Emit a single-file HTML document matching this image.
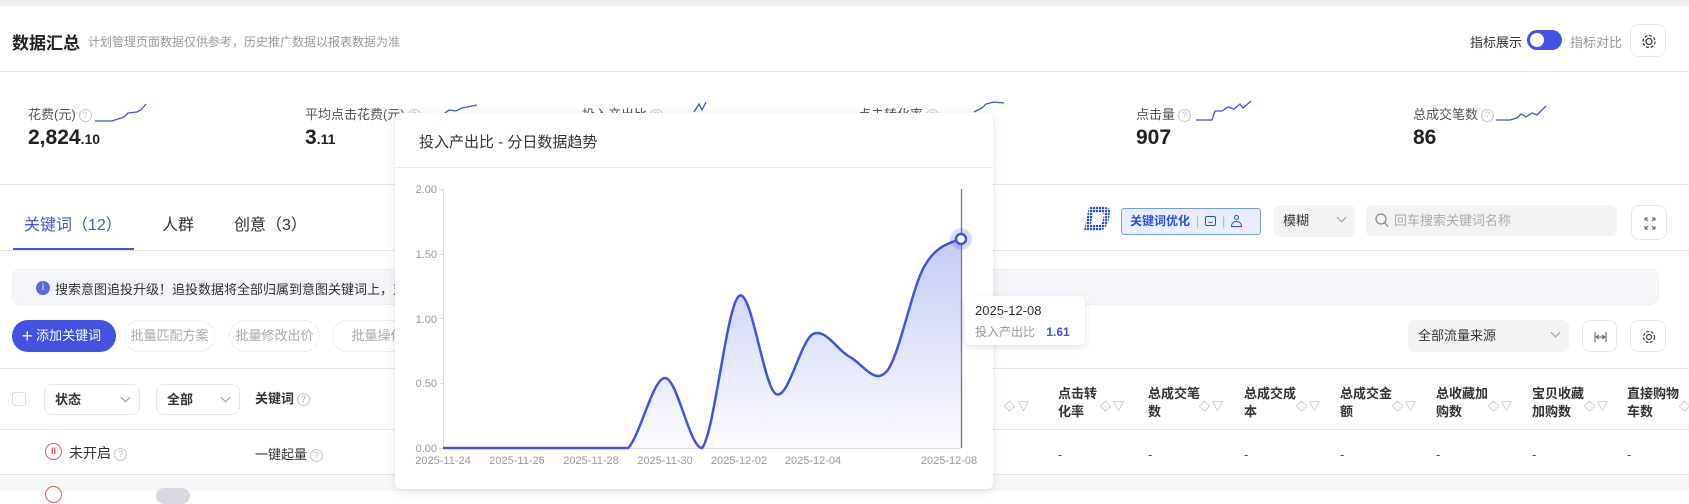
<!DOCTYPE html>
<html><head><meta charset="utf-8"><style>
*{margin:0;padding:0;box-sizing:border-box}
body{width:1689px;height:491px;overflow:hidden;background:#fff;font-family:"Liberation Sans","Noto Sans CJK SC",sans-serif;color:#333;position:relative}
.a{position:absolute;white-space:nowrap}
.q{display:inline-block;width:13px;height:13px;border:1px solid #c8c8c8;border-radius:50%;font-size:9px;color:#bbb;text-align:center;line-height:11px;vertical-align:middle;margin-left:3px}
.lbl{font-size:13px;color:#555}
.val{font-size:21px;font-weight:bold;color:#222}
.val small{font-size:14px}
.hr{position:absolute;left:0;width:1689px;height:1px;background:#e6e7eb}
.btn{position:absolute;border:1px solid #eee;border-radius:16px;font-size:13px;color:#aaa;text-align:center;line-height:30px;height:32px}
.sel{position:absolute;border:1px solid #e6e7eb;border-radius:8px;height:31px;font-size:13px;font-weight:bold;line-height:29px;padding-left:10px}
.chev{position:absolute;right:10px;top:9px;width:7px;height:7px;border-right:1px solid #999;border-bottom:1px solid #999;transform:rotate(45deg)}
.th{position:absolute;top:385px;font-size:13px;font-weight:bold;color:#333;line-height:18px}
.ic{position:absolute;border:1px solid #e6e7eb;border-radius:8px;width:36px;height:36px}
.dash{position:absolute;top:447px;font-size:13px;color:#555}
</style></head><body>
<div class="a" style="left:0;top:0;width:1689px;height:7px;background:linear-gradient(#e8e9ee,#f6f6f9)"></div>
<div class="a" style="left:12px;top:29px;font-size:17px;font-weight:bold;color:#222">数据汇总</div>
<div class="a" style="left:88px;top:33px;font-size:12px;color:#999">计划管理页面数据仅供参考，历史推广数据以报表数据为准</div>
<div class="a" style="left:1470px;top:32px;font-size:13px;color:#333">指标展示</div>
<div class="a" style="left:1527px;top:30px;width:35px;height:20px;border-radius:10px;background:#4352e0"><div style="position:absolute;left:3px;top:3px;width:14px;height:14px;border-radius:50%;background:#fff"></div></div>
<div class="a" style="left:1570px;top:32px;font-size:13px;color:#999">指标对比</div>
<div class="ic" style="left:1630px;top:24px;width:36px;height:33px"><svg width="36" height="33" viewBox="0 0 36 33"><circle cx="18" cy="16.5" r="3" fill="none" stroke="#444" stroke-width="1.3"/><circle cx="18" cy="16.5" r="6" fill="none" stroke="#444" stroke-width="1.3" stroke-dasharray="3 1.7"/></svg></div>
<div class="hr" style="top:71px"></div>

<!-- metrics -->
<div class="a lbl" style="left:28px;top:104px">花费(元)<span class="q">?</span></div>
<div class="a val" style="left:28px;top:126px">2,824<small>.10</small></div>
<div class="a lbl" style="left:305px;top:104px">平均点击花费(元)<span class="q">?</span></div>
<div class="a val" style="left:305px;top:126px">3<small>.11</small></div>
<div class="a lbl" style="left:582px;top:104px">投入产出比<span class="q">?</span></div>
<div class="a lbl" style="left:858px;top:104px">点击转化率<span class="q">?</span></div>
<div class="a lbl" style="left:1136px;top:104px">点击量<span class="q">?</span></div>
<div class="a val" style="left:1136px;top:126px">907</div>
<div class="a lbl" style="left:1413px;top:104px">总成交笔数<span class="q">?</span></div>
<div class="a val" style="left:1413px;top:126px">86</div>
<svg class="a" style="left:0;top:0" width="1689" height="130"><g fill="none" stroke="#4352e0" stroke-width="1.3">
<path d="M95,121 L112,121 L124,117 L128,113 L137,112 L141,110 L146,104"/>
<path d="M441,116 L449,110 L456,111 L462,108 L477,105"/>
<path d="M694,112 L699,104 L702,110 L706,102"/>
<path d="M974,112 L982,108 L986,104 L994,102 L1004,103"/>
<path d="M1196,120 L1212,120 L1215,111 L1222,111 L1228,107 L1234,109 L1240,104 L1243,108 L1251,101"/>
<path d="M1496,120 L1510,120 L1517,118 L1521,114 L1526,117 L1532,113 L1537,115 L1546,106"/>
</g></svg>
<div class="hr" style="top:184px"></div>

<!-- tabs -->
<div class="a" style="left:24px;top:211px;font-size:16px;color:#4352e0">关键词（12）</div>
<div class="a" style="left:162px;top:211px;font-size:16px;color:#333">人群</div>
<div class="a" style="left:234px;top:211px;font-size:16px;color:#333">创意（3）</div>
<div class="a" style="left:13px;top:248px;width:121px;height:2px;background:#4352e0"></div>
<div class="hr" style="top:250px"></div>

<!-- right controls -->
<svg class="a" style="left:1084px;top:207px" width="30" height="26" viewBox="0 0 30 26">
<defs><pattern id="dp" width="3" height="3" patternUnits="userSpaceOnUse"><rect x="0" y="0" width="2.2" height="2.2" fill="#2a4fd8"/></pattern>
<clipPath id="dc"><path d="M5,0 L20,0 Q27,0 26,6 L25,12 Q24,19 17,24 L0,24 Z M9,6 L7,18 L15,18 Q19,16 19,12 L20,8 Q20,6 17,6 Z" clip-rule="evenodd"/></clipPath></defs>
<rect x="0" y="0" width="30" height="26" fill="url(#dp)" clip-path="url(#dc)"/></svg>
<div class="a" style="left:1121px;top:208px;width:140px;height:27px;border:1px solid #7a9af0;background:#e6eeff;border-radius:3px;font-size:12px;font-weight:bold;color:#2a4fd8;line-height:25px;padding-left:8px">关键词优化<span style="color:#aac;font-weight:normal;margin:0 6px">|</span><span style="display:inline-block;width:11px;height:10px;border:1.3px solid #2a4fd8;border-radius:2px;vertical-align:-1px;position:relative"><span style="position:absolute;left:2px;top:4px;width:5px;height:2px;border-bottom:1px solid #2a4fd8;border-radius:0 0 3px 3px"></span></span><span style="color:#aac;font-weight:normal;margin:0 6px">|</span><span style="display:inline-block;width:11px;height:12px;vertical-align:-2px;position:relative"><span style="position:absolute;left:3px;top:0;width:5px;height:5px;border:1.3px solid #2a4fd8;border-radius:50%"></span><span style="position:absolute;left:0;top:6px;width:11px;height:6px;border:1.3px solid #2a4fd8;border-radius:5px 5px 0 0"></span></span></div>
<div class="a" style="left:1274px;top:205px;width:81px;height:32px;background:#f2f3f5;border-radius:6px;font-size:13px;line-height:32px;padding-left:9px">模糊<div class="chev"></div></div>
<div class="a" style="left:1366px;top:205px;width:251px;height:31px;background:#f2f3f5;border-radius:6px;font-size:13px;color:#aaa;line-height:31px;padding-left:28px">回车搜索关键词名称<svg style="position:absolute;left:9px;top:8px" width="14" height="15"><circle cx="6" cy="6" r="5" fill="none" stroke="#888" stroke-width="1.3"/><path d="M9.5,9.5L13,13.5" stroke="#888" stroke-width="1.3"/></svg></div>
<div class="ic" style="left:1631px;top:205px;height:35px"><svg width="36" height="35"><g stroke="#666" stroke-width="1" fill="none"><path d="M13,12h3M13,12v3M13,12l3,3M23,12h-3M23,12v3M23,12l-3,3M13,23h3M13,23v-3M13,23l3,-3M23,23h-3M23,23v-3M23,23l-3,-3"/></g></svg></div>

<!-- banner -->
<div class="a" style="left:12px;top:269px;width:1647px;height:36px;background:#f5f6fb;border:1px solid #eceef6;border-radius:8px"></div>
<div class="a" style="left:36px;top:281px;width:14px;height:14px;border-radius:50%;background:#5a68e0;color:#fff;font-size:10px;text-align:center;line-height:14px">i</div>
<div class="a" style="left:55px;top:279px;font-size:13px;color:#333">搜索意图追投升级！追投数据将全部归属到意图关键词上，对于所有的关键词</div>

<!-- buttons -->
<div class="a" style="left:12px;top:320px;width:104px;height:32px;border-radius:16px;background:#4352e0;color:#fff;font-size:13px;line-height:32px;padding-left:10px"><span style="font-size:18px;vertical-align:-2px">+</span> 添加关键词</div>
<div class="btn" style="left:124px;top:320px;width:91px">批量匹配方案</div>
<div class="btn" style="left:229px;top:320px;width:91px">批量修改出价</div>
<div class="btn" style="left:332px;top:320px;width:91px">批量操作</div>
<div class="a" style="left:1408px;top:320px;width:161px;height:32px;background:#f2f3f5;border-radius:6px;font-size:13px;line-height:32px;padding-left:10px">全部流量来源<div class="chev"></div></div>
<div class="ic" style="left:1582px;top:320px;height:32px;width:35px"><svg width="35" height="32"><g stroke="#555" stroke-width="1" fill="none"><path d="M12,11v10M23,11v10M13,16h9M13,16l3,-2M13,16l3,2M22,16l-3,-2M22,16l-3,2"/></g></svg></div>
<div class="ic" style="left:1630px;top:320px;height:32px;width:36px"><svg width="36" height="32"><circle cx="18" cy="16" r="2.5" fill="none" stroke="#444" stroke-width="1.2"/><circle cx="18" cy="16" r="5.5" fill="none" stroke="#444" stroke-width="1.2" stroke-dasharray="3 1.6"/></svg></div>

<!-- table -->
<div class="hr" style="top:368px"></div>
<div class="a" style="left:12px;top:392px;width:14px;height:14px;border:1px solid #ddd;border-radius:3px"></div>
<div class="sel" style="left:44px;top:384px;width:96px">状态<div class="chev"></div></div>
<div class="sel" style="left:156px;top:384px;width:84px">全部<div class="chev"></div></div>
<div class="th" style="left:255px;top:390px">关键词<span class="q">?</span></div>
<div class="th" style="left:980px">击</div>
<div class="th" style="left:1004px;top:398px;font-weight:normal;color:#999;font-size:11px">◇ ▽</div>
<div class="th" style="left:1058px">点击转<br>化率</div>
<div class="th" style="left:1148px">总成交笔<br>数</div>
<div class="th" style="left:1244px">总成交成<br>本</div>
<div class="th" style="left:1340px">总成交金<br>额</div>
<div class="th" style="left:1436px">总收藏加<br>购数</div>
<div class="th" style="left:1532px">宝贝收藏<br>加购数</div>
<div class="th" style="left:1627px">直接购物<br>车数</div>
<div class="a" style="left:1100px;top:398px;font-size:11px;color:#999;letter-spacing:2px">◇▽</div>
<div class="a" style="left:1199px;top:398px;font-size:11px;color:#999;letter-spacing:2px">◇▽</div>
<div class="a" style="left:1296px;top:398px;font-size:11px;color:#999;letter-spacing:2px">◇▽</div>
<div class="a" style="left:1392px;top:398px;font-size:11px;color:#999;letter-spacing:2px">◇▽</div>
<div class="a" style="left:1488px;top:398px;font-size:11px;color:#999;letter-spacing:2px">◇▽</div>
<div class="a" style="left:1584px;top:398px;font-size:11px;color:#999;letter-spacing:2px">◇▽</div>
<div class="a" style="left:1679px;top:398px;font-size:11px;color:#999">◇</div>
<div class="hr" style="top:429px"></div>
<div class="a" style="left:45px;top:443px;width:17px;height:17px;border:1.5px solid #e05a5a;border-radius:50%;color:#e05a5a;font-size:9px;text-align:center;line-height:14px;font-weight:bold">II</div>
<div class="a" style="left:69px;top:443px;font-size:14px;color:#333">未开启<span class="q">?</span></div>
<div class="a" style="left:255px;top:444px;font-size:13px;color:#333">一键起量<span class="q">?</span></div>
<div class="dash" style="left:1058px">-</div><div class="dash" style="left:1148px">-</div><div class="dash" style="left:1244px">-</div><div class="dash" style="left:1340px">-</div><div class="dash" style="left:1436px">-</div><div class="dash" style="left:1532px">-</div><div class="dash" style="left:1627px">-</div>
<div class="hr" style="top:474px"></div>
<div class="a" style="left:0;top:475px;width:1689px;height:16px;background:#f7f8fa"></div>
<div class="a" style="left:45px;top:486px;width:17px;height:17px;border:1.5px solid #e05a5a;border-radius:50%"></div>
<div class="a" style="left:156px;top:488px;width:34px;height:16px;border-radius:8px;background:#d8d9e0"></div>

<!-- popup -->
<div class="a" style="left:395px;top:113px;width:598px;height:376px;background:#fff;border-radius:6px;box-shadow:0 2px 10px rgba(0,0,0,0.12)">
<div class="a" style="left:24px;top:18px;font-size:15px;color:#333">投入产出比 - 分日数据趋势</div>
<div class="a" style="left:0;top:54px;width:598px;height:1px;background:#ececf0"></div>
</div>
<svg class="a" style="left:0;top:0" width="1689" height="491">
<defs><linearGradient id="g" x1="0" y1="0" x2="0" y2="1"><stop offset="0" stop-color="#4352e0" stop-opacity="0.3"/><stop offset="1" stop-color="#4352e0" stop-opacity="0.02"/></linearGradient></defs>
<g font-family="Liberation Sans" font-size="11" fill="#999" text-anchor="end">
<text x="437" y="193">2.00</text><text x="437" y="258">1.50</text><text x="437" y="323">1.00</text><text x="437" y="387">0.50</text><text x="437" y="452">0.00</text></g>
<g stroke="#ddd" stroke-width="1"><path d="M443.5,189V448.5M439,189.5h4M439,254.5h4M439,318.5h4M439,383.5h4M439,448.5h4"/><path d="M443,448.5H961"/></g>
<g font-family="Liberation Sans" font-size="11" fill="#999" text-anchor="middle">
<text x="443" y="464">2025-11-24</text><text x="517" y="464">2025-11-26</text><text x="591" y="464">2025-11-28</text><text x="665" y="464">2025-11-30</text><text x="739" y="464">2025-12-02</text><text x="813" y="464">2025-12-04</text><text x="949" y="464">2025-12-08</text></g>
<path d="M443,448 L628,448 C640.3,436.3 652.7,378 665,378 C677.3,378 689.7,448 702,448 C714.3,434.3 726.7,305 739,296 C751.3,287 763.7,387.7 776,394 C788.3,400.3 800.7,340.2 813,334 C825.3,327.8 837.7,350.8 850,357 C862.3,363.2 874.7,386 887,371 C899.3,356 911.7,289 924,267 C936.3,245 948.7,243.7 961,239 L961,448 Z" fill="url(#g)"/>
<path d="M443,448 L628,448 C640.3,436.3 652.7,378 665,378 C677.3,378 689.7,448 702,448 C714.3,434.3 726.7,305 739,296 C751.3,287 763.7,387.7 776,394 C788.3,400.3 800.7,340.2 813,334 C825.3,327.8 837.7,350.8 850,357 C862.3,363.2 874.7,386 887,371 C899.3,356 911.7,289 924,267 C936.3,245 948.7,243.7 961,239" fill="none" stroke="#4352e0" stroke-width="2.5"/>
<path d="M961.5,189V448" stroke="#777" stroke-width="1.3"/>
<circle cx="961" cy="239" r="11" fill="#4352e0" fill-opacity="0.2"/>
<circle cx="961" cy="239" r="5" fill="#fff" stroke="#4352e0" stroke-width="2.5"/>
</svg>
<div class="a" style="left:965px;top:296px;width:120px;height:49px;background:#fff;border-radius:5px;box-shadow:0 2px 8px rgba(0,0,0,0.12)">
<div class="a" style="left:10px;top:7px;font-size:13px;color:#333">2025-12-08</div>
<div class="a" style="left:10px;top:27px;font-size:12px;color:#999">投入产出比 <b style="color:#4352e0;margin-left:8px;font-size:12px">1.61</b></div>
</div>
</body></html>
